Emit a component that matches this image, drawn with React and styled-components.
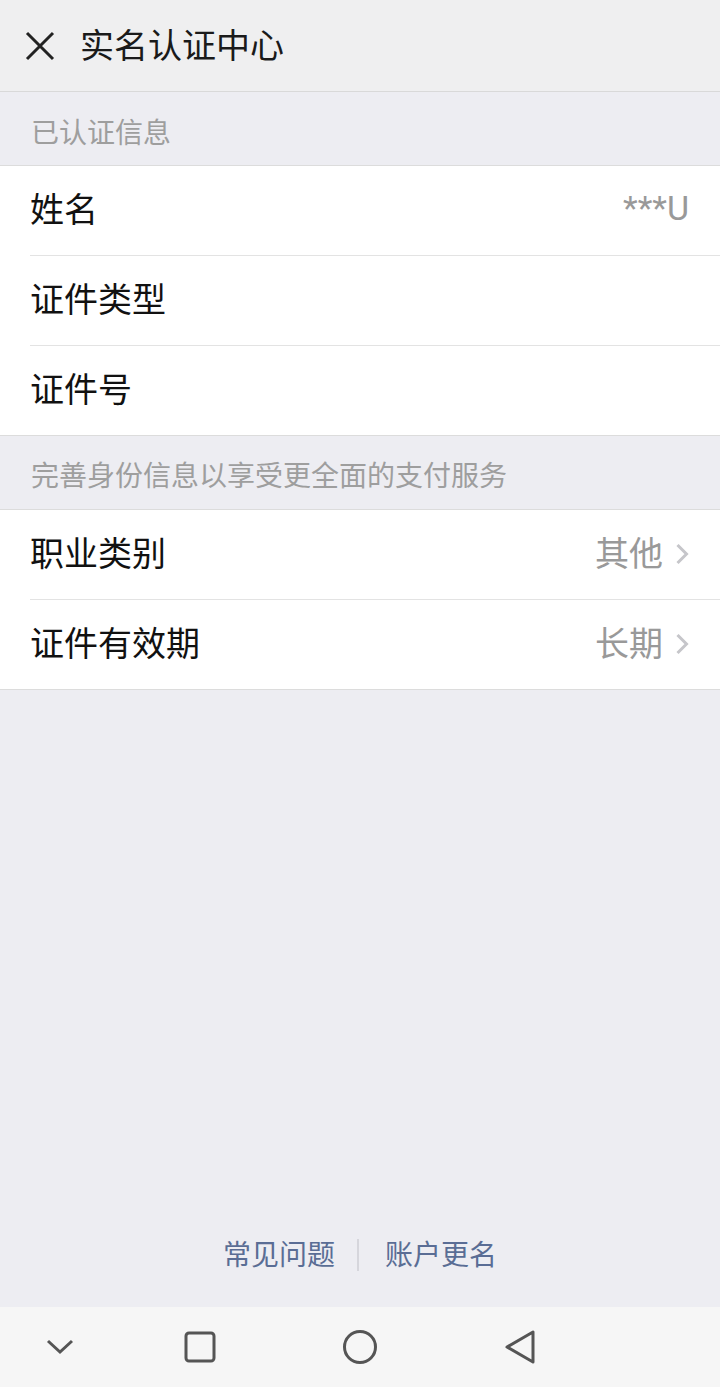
import React from "react";
import styled, { createGlobalStyle } from "styled-components";

const Global = createGlobalStyle`
  html, body { margin: 0; padding: 0; }
  body {
    font-family: "Noto Sans CJK SC", "Noto Sans", sans-serif;
    background: #ededf2;
  }
`;

const Page = styled.div`
  width: 720px;
  height: 1387px;
  display: flex;
  flex-direction: column;
  background: #ededf2;
`;

const Header = styled.div`
  height: 91px;
  flex: none;
  display: flex;
  align-items: center;
  background: #efeff0;
  border-bottom: 1px solid #d9d9d9;
  padding-left: 24px;
  gap: 24px;
`;

const Title = styled.div`
  font-size: 34px;
  color: #1a1a1a;
  line-height: 1;
  margin-top: -3px;
`;

const SectionLabel = styled.div`
  height: ${(p) => p.h}px;
  flex: none;
  display: flex;
  align-items: center;
  padding-left: 31px;
  padding-top: ${(p) => p.shift}px;
  font-size: 28px;
  color: #9e9e9e;
  border-bottom: 1px solid #dcdcdc;
  box-sizing: border-box;
`;

const Group = styled.div`
  background: #fff;
  border-bottom: 1px solid #dcdcdc;
`;

const Row = styled.div`
  height: 89px;
  display: flex;
  align-items: center;
  margin-left: 30px;
  padding-right: 31px;
  border-top: ${(p) => (p.first ? "none" : "1px solid #e3e3e3")};
`;

const Label = styled.div`
  flex: 1;
  font-size: 34px;
  color: #111;
  line-height: 1;
  margin-top: -5px;
`;

const Value = styled.div`
  font-size: 34px;
  font-family: ${(p) =>
    p.latin ? '"Roboto", "Noto Sans", sans-serif' : "inherit"};
  color: #999;
  line-height: 1;
  margin-top: -5px;
  display: flex;
  align-items: center;
  gap: 12px;
`;

const ChevronBox = styled.span`
  display: flex;
  margin-top: 4px;
`;

const Spacer = styled.div`
  flex: 1;
`;

const Links = styled.div`
  display: flex;
  justify-content: center;
  align-items: center;
  padding-bottom: 36px;
`;

const LinkText = styled.span`
  font-size: 28px;
  color: #5a6d95;
  line-height: 1;
`;

const Sep = styled.span`
  width: 2px;
  height: 32px;
  background: #d6d6dc;
  margin: 4px 26px 0 22px;
`;

const NavBar = styled.div`
  height: 80px;
  flex: none;
  background: #f6f6f6;
  display: flex;
  align-items: center;
  padding-left: 40px;
`;

const NavSlot = styled.div`
  width: 40px;
  height: 40px;
  margin-left: ${(p) => p.gap || 0}px;
  display: flex;
  align-items: center;
  justify-content: center;
`;

const Chevron = () => (
  <ChevronBox>
    <svg width="14" height="22" viewBox="0 0 14 22">
      <path d="M2.5 2l9 9-9 9" fill="none" stroke="#c6c6ca" strokeWidth="3" />
    </svg>
  </ChevronBox>
);

const Close = () => (
  <svg width="32" height="32" viewBox="0 0 32 32">
    <path d="M3 3l26 26M29 3L3 29" stroke="#222" strokeWidth="3" fill="none" />
  </svg>
);

export default function App() {
  return (
    <>
      <Global />
      <Page>
        <Header>
          <Close />
          <Title>实名认证中心</Title>
        </Header>
        <SectionLabel h={74} shift={4}>已认证信息</SectionLabel>
        <Group>
          <Row first>
            <Label>姓名</Label>
            <Value latin>***U</Value>
          </Row>
          <Row>
            <Label>证件类型</Label>
          </Row>
          <Row>
            <Label>证件号</Label>
          </Row>
        </Group>
        <SectionLabel h={74} shift={3}>完善身份信息以享受更全面的支付服务</SectionLabel>
        <Group>
          <Row first>
            <Label>职业类别</Label>
            <Value>
              其他
              <Chevron />
            </Value>
          </Row>
          <Row>
            <Label>证件有效期</Label>
            <Value>
              长期
              <Chevron />
            </Value>
          </Row>
        </Group>
        <Spacer />
        <Links>
          <LinkText>常见问题</LinkText>
          <Sep />
          <LinkText>账户更名</LinkText>
        </Links>
        <NavBar>
          <NavSlot>
            <svg width="28" height="16" viewBox="0 0 28 16">
              <path d="M2 2l12 11L26 2" fill="none" stroke="#555" strokeWidth="3" />
            </svg>
          </NavSlot>
          <NavSlot gap={100}>
            <svg width="32" height="32" viewBox="0 0 32 32">
              <rect x="2" y="2" width="28" height="28" rx="3" fill="none" stroke="#555" strokeWidth="3" />
            </svg>
          </NavSlot>
          <NavSlot gap={120}>
            <svg width="36" height="36" viewBox="0 0 36 36">
              <circle cx="18" cy="18" r="15.5" fill="none" stroke="#555" strokeWidth="3" />
            </svg>
          </NavSlot>
          <NavSlot gap={120}>
            <svg width="32" height="36" viewBox="0 0 32 36">
              <path d="M29 3v30L3 18z" fill="none" stroke="#555" strokeWidth="3" strokeLinejoin="round" />
            </svg>
          </NavSlot>
        </NavBar>
      </Page>
    </>
  );
}
